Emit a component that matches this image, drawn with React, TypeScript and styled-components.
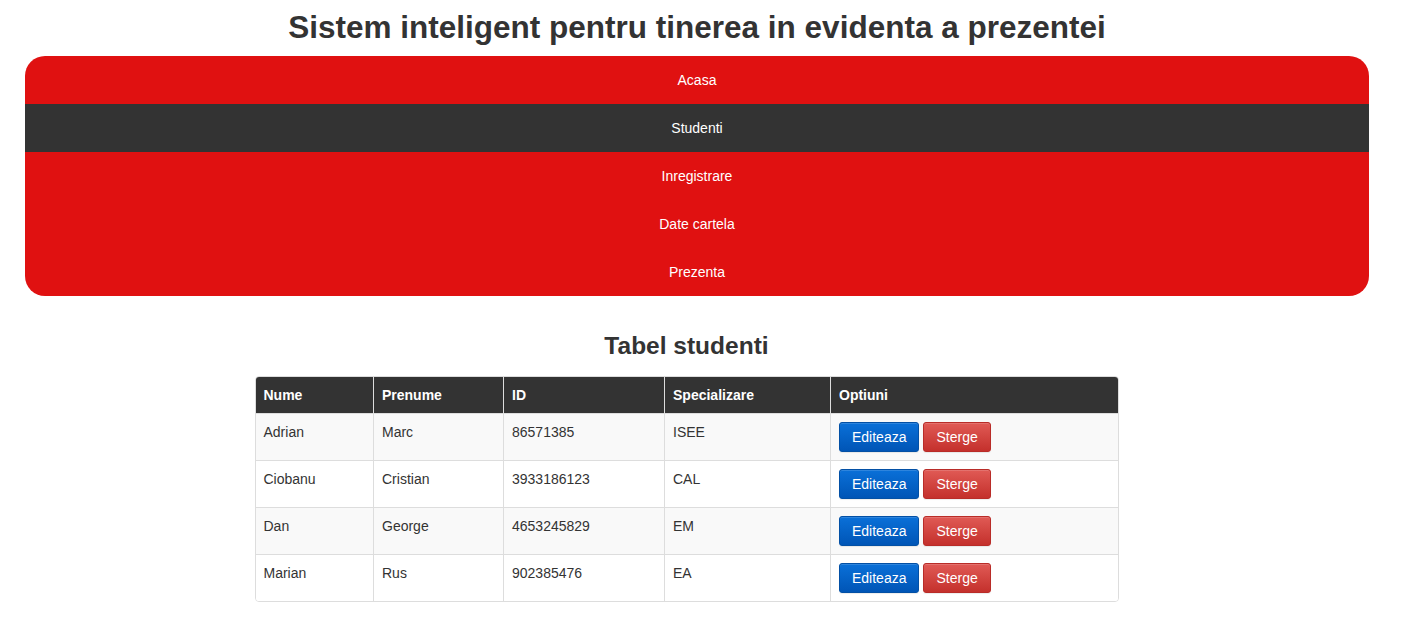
import React from "react";
import styled, { createGlobalStyle } from "styled-components";

const Global = createGlobalStyle`
  html, body { margin: 0; padding: 0; background: #fff; }
  body { font-family: "Liberation Sans", Arial, sans-serif; color: #333; font-size: 14px; }
  *, *::before, *::after { box-sizing: border-box; }
`;

const Page = styled.div`
  display: flex;
  flex-direction: column;
  align-items: center;
  padding: 0 38px 0 25px;
`;

const Title = styled.h1`
  margin: 8px 0 0;
  height: 48px;
  line-height: 38px;
  font-size: 31.5px;
  font-weight: bold;
  color: #333;
  text-align: center;
`;

const Nav = styled.ul`
  list-style: none;
  margin: 0;
  padding: 0;
  width: 100%;
  background: #e01111;
  border-radius: 20px;
  overflow: hidden;
  display: flex;
  flex-direction: column;
`;

const NavItem = styled.li<{ $active?: boolean }>`
  height: 48px;
  display: flex;
  align-items: center;
  justify-content: center;
  color: #fff;
  font-size: 14px;
  background: ${(p) => (p.$active ? "#333333" : "transparent")};
`;

const SubTitle = styled.h2`
  margin: 33px 21px 0 0;
  height: 47px;
  line-height: 34px;
  font-size: 24.5px;
  font-weight: bold;
  color: #333;
`;

const TableWrap = styled.div`
  width: 864px;
  border: 1px solid #dddddd;
  border-radius: 4px;
  overflow: hidden;
  margin-right: 21px;
`;

const Table = styled.table`
  width: 100%;
  border-collapse: collapse;
  table-layout: fixed;
`;

const Th = styled.th<{ $w?: number }>`
  background: #333333;
  color: #fff;
  font-weight: bold;
  text-align: left;
  padding: 0 8px;
  height: 36px;
  line-height: 20px;
  font-size: 14px;
  border-left: 1px solid #dddddd;
  width: ${(p) => (p.$w ? `${p.$w}px` : "auto")};
  &:first-child { border-left: none; }
`;

const Tr = styled.tr<{ $odd?: boolean }>`
  background: ${(p) => (p.$odd ? "#f9f9f9" : "#ffffff")};
`;

const Td = styled.td`
  padding: 8px;
  height: 47px;
  line-height: 20px;
  vertical-align: top;
  font-size: 14px;
  color: #333;
  border-top: 1px solid #dddddd;
  border-left: 1px solid #dddddd;
  &:first-child { border-left: none; }
`;

const Actions = styled.div`
  display: flex;
  gap: 4px;
`;

const Btn = styled.button<{ $kind: "edit" | "delete" }>`
  font-family: "Liberation Sans", Arial, sans-serif;
  font-size: 14px;
  color: #fff;
  height: 30px;
  padding: 0 12px;
  border-radius: 3px;
  cursor: pointer;
  border: 1px solid ${(p) => (p.$kind === "edit" ? "#0350a5" : "#b92c28")};
  background: ${(p) =>
    p.$kind === "edit"
      ? "linear-gradient(to bottom, #0a70d8 0%, #0055b6 100%)"
      : "linear-gradient(to bottom, #e05a55 0%, #c4302c 100%)"};
  box-shadow: inset 0 1px 0 rgba(255,255,255,0.15), 0 1px 1px rgba(0,0,0,0.075);
`;

const students = [
  { nume: "Adrian", prenume: "Marc", id: "86571385", spec: "ISEE" },
  { nume: "Ciobanu", prenume: "Cristian", id: "3933186123", spec: "CAL" },
  { nume: "Dan", prenume: "George", id: "4653245829", spec: "EM" },
  { nume: "Marian", prenume: "Rus", id: "902385476", spec: "EA" },
];

const navItems = ["Acasa", "Studenti", "Inregistrare", "Date cartela", "Prezenta"];

export default function App() {
  return (
    <>
      <Global />
      <Page>
        <Title>Sistem inteligent pentru tinerea in evidenta a prezentei</Title>
        <Nav>
          {navItems.map((n) => (
            <NavItem key={n} $active={n === "Studenti"}>{n}</NavItem>
          ))}
        </Nav>
        <SubTitle>Tabel studenti</SubTitle>
        <TableWrap>
          <Table>
            <thead>
              <tr>
                <Th $w={118}>Nume</Th>
                <Th $w={130}>Prenume</Th>
                <Th $w={161}>ID</Th>
                <Th $w={166}>Specializare</Th>
                <Th>Optiuni</Th>
              </tr>
            </thead>
            <tbody>
              {students.map((s, i) => (
                <Tr key={s.id} $odd={i % 2 === 0}>
                  <Td>{s.nume}</Td>
                  <Td>{s.prenume}</Td>
                  <Td>{s.id}</Td>
                  <Td>{s.spec}</Td>
                  <Td>
                    <Actions>
                      <Btn $kind="edit">Editeaza</Btn>
                      <Btn $kind="delete">Sterge</Btn>
                    </Actions>
                  </Td>
                </Tr>
              ))}
            </tbody>
          </Table>
        </TableWrap>
      </Page>
    </>
  );
}
